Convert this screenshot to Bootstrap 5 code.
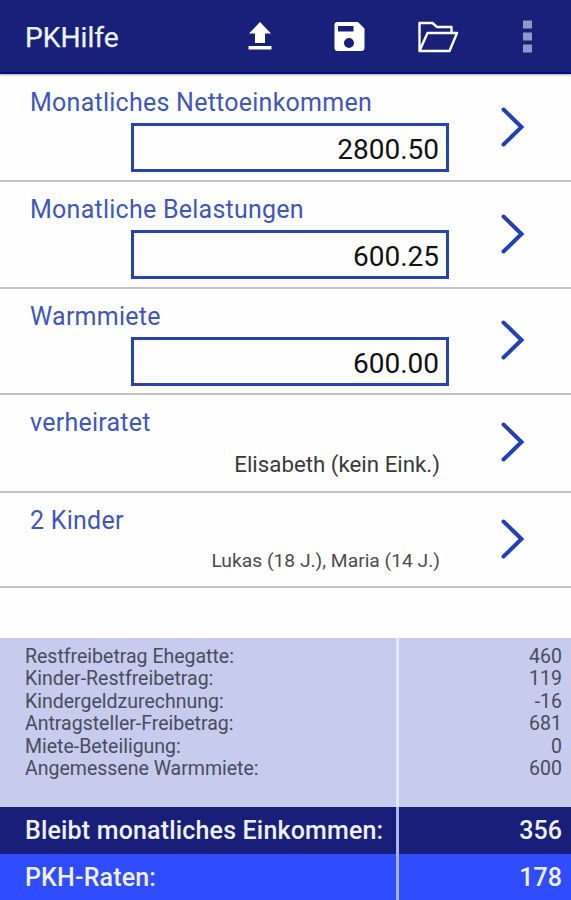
<!DOCTYPE html>
<html lang="de">
<head>
<meta charset="utf-8">
<meta name="viewport" content="width=device-width, initial-scale=1">
<title>PKHilfe</title>
<link href="https://cdn.jsdelivr.net/npm/bootstrap@5.3.0/dist/css/bootstrap.min.css" rel="stylesheet">
<style>
  body { font-family: Roboto, "Liberation Sans", sans-serif; background: #fefefe; }
  .app { height: 900px; width: 571px; }
  .topbar { height: 74px; background: #19207a; border-bottom: 2px solid #04107a; box-shadow: 0 1px 2px rgba(0,0,0,.35); padding: 0 39px 0 25px; position: relative; }
  .topbar h1 { font-size: 28.2px; line-height: 76px; color: #eef0ff; -webkit-text-stroke: .25px #eef0ff; }
  .entry { border-bottom: 2px solid #c3c3c3; padding-left: 30px; color: #111; height: 107px; }
  .entry-first { height: 108px; padding-top: 1px; }
  .entry-person { height: 98px; }
  .entry-kids { height: 95px; }
  .entry-warm { height: 106px; }
  .entry-body { width: 419px; }
  .entry-title { font-size: 25px; line-height: 28px; color: #3f57b9; padding-top: 14px; letter-spacing: .25px; }
  .amount { width: 318px; height: 49px; border: 3px solid #2743b0; padding: 2px 7px 0 0; font-size: 28px; line-height: 43px; margin-top: 6px; background: #fefefe; }
  .note { font-size: 22.3px; line-height: 28px; padding-right: 9px; margin-top: 13px; color: #3a3a3a; }
  .note-sm { font-size: 19.25px; line-height: 28px; padding-right: 9px; margin-top: 12px; color: #4c4c4c; }
  .chev { margin: 0 46px 2px auto; }
  .sums { height: 262px; }
  .cell-l { width: 399px; border-right: 3px solid #e3e7fa; padding-left: 25px; }
  .cell-r { padding-right: 9px; }
  .detail { background: #c7cbed; height: 169px; font-size: 19.5px; line-height: 22.4px; color: #4a4c5e; }
  .detail > div { padding-top: 8px; }
  .rest { background: #191e78; height: 47px; }
  .rate { background: #304cff; height: 46px; }
  .strong-row { font-size: 25px; font-weight: 500; color: #eef0ff; line-height: 47px; }
  .strong-row .cell-l { border-right-color: #a9b4ee; letter-spacing: .17px; }
</style>
<script src="https://cdn.jsdelivr.net/npm/bootstrap@5.3.0/dist/js/bootstrap.bundle.min.js"></script>
</head>
<body>
<div class="app d-flex flex-column overflow-hidden">
  <header class="topbar d-flex flex-shrink-0">
    <h1 class="m-0 fw-normal flex-grow-1">PKHilfe</h1>
    <div class="d-flex">
      <svg width="28" height="74" viewBox="247 0 28 74" fill="#fff"><path d="M260 22l11 11.500h-6V43h-10v-9.500h-6zM248.500 46h23v3.500h-23z"/></svg>
      <svg class="ms-5" width="42" height="74" viewBox="323.500 0 42 74" fill="#fff"><path fill-rule="evenodd" d="M338 22h20.500l6.500 6.500V48a3 3 0 0 1-3 3h-24a3 3 0 0 1-3-3V25a3 3 0 0 1 3-3zM338.500 26v5.500h15.500V26zM349.500 38a5 5 0 1 0 0 10 5 5 0 0 0 0-10z"/></svg>
      <svg class="ms-5" width="47" height="74" viewBox="413.500 0 47 74" fill="none" stroke="#fff" stroke-width="2.400" stroke-linejoin="round"><path d="M420 51V23h13l4.500 4H452v6M420 51l8-18h29.500L450 51z"/></svg>
      <svg class="ms-5" width="24" height="74" viewBox="508 0 24 74" fill="#8f98c8"><path d="M523 20.500h9v8h-9zM523 32.500h9v8h-9zM523 44.500h9v8h-9z"/></svg>
    </div>
  </header>

  <main class="flex-grow-1">
    <section class="entry entry-first d-flex align-items-center">
      <div class="entry-body align-self-start"><div class="entry-title">Monatliches Nettoeinkommen</div><div class="amount ms-auto text-end">2800.50</div></div>
      <svg class="chev" width="24" height="42" viewBox="0 0 24 42" fill="none" stroke="#2340b4" stroke-width="4" stroke-linecap="round"><path d="M2.500 3.500L20.500 21L2.500 38.500"/></svg>
    </section>
    <section class="entry d-flex align-items-center">
      <div class="entry-body align-self-start"><div class="entry-title">Monatliche Belastungen</div><div class="amount ms-auto text-end">600.25</div></div>
      <svg class="chev" width="24" height="42" viewBox="0 0 24 42" fill="none" stroke="#2340b4" stroke-width="4" stroke-linecap="round"><path d="M2.500 3.500L20.500 21L2.500 38.500"/></svg>
    </section>
    <section class="entry entry-warm d-flex align-items-center">
      <div class="entry-body align-self-start"><div class="entry-title">Warmmiete</div><div class="amount ms-auto text-end">600.00</div></div>
      <svg class="chev" width="24" height="42" viewBox="0 0 24 42" fill="none" stroke="#2340b4" stroke-width="4" stroke-linecap="round"><path d="M2.500 3.500L20.500 21L2.500 38.500"/></svg>
    </section>
    <section class="entry entry-person d-flex align-items-center">
      <div class="entry-body align-self-start"><div class="entry-title">verheiratet</div><div class="note text-end">Elisabeth (kein Eink.)</div></div>
      <svg class="chev" width="24" height="42" viewBox="0 0 24 42" fill="none" stroke="#2340b4" stroke-width="4" stroke-linecap="round"><path d="M2.500 3.500L20.500 21L2.500 38.500"/></svg>
    </section>
    <section class="entry entry-kids d-flex align-items-center">
      <div class="entry-body align-self-start"><div class="entry-title">2 Kinder</div><div class="note-sm text-end">Lukas (18 J.), Maria (14 J.)</div></div>
      <svg class="chev" width="24" height="42" viewBox="0 0 24 42" fill="none" stroke="#2340b4" stroke-width="4" stroke-linecap="round"><path d="M2.500 3.500L20.500 21L2.500 38.500"/></svg>
    </section>
  </main>

  <footer class="sums flex-shrink-0">
    <div class="detail d-flex">
      <div class="cell-l">
        <div>Restfreibetrag Ehegatte:</div>
        <div>Kinder-Restfreibetrag:</div>
        <div>Kindergeldzurechnung:</div>
        <div>Antragsteller-Freibetrag:</div>
        <div>Miete-Beteiligung:</div>
        <div>Angemessene Warmmiete:</div>
      </div>
      <div class="cell-r flex-grow-1 text-end">
        <div>460</div>
        <div>119</div>
        <div>-16</div>
        <div>681</div>
        <div>0</div>
        <div>600</div>
      </div>
    </div>
    <div class="rest strong-row d-flex"><div class="cell-l">Bleibt monatliches Einkommen:</div><div class="cell-r flex-grow-1 text-end">356</div></div>
    <div class="rate strong-row d-flex"><div class="cell-l">PKH-Raten:</div><div class="cell-r flex-grow-1 text-end">178</div></div>
  </footer>
</div>
</body>
</html>
